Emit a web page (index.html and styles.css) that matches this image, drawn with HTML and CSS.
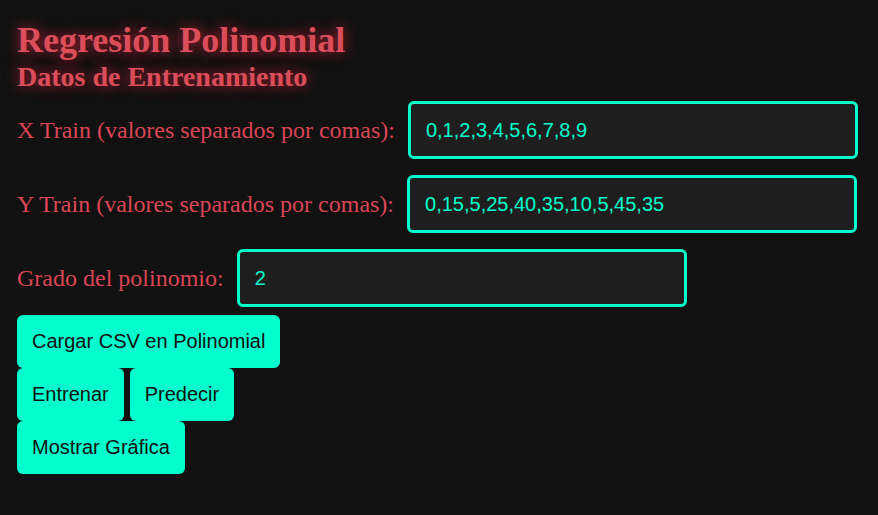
FILE: index.html
```html
<!DOCTYPE html>
<html lang="es">
<head>
<meta charset="utf-8">
<title>Regresión Polinomial</title>
<link rel="stylesheet" href="styles.css">
</head>
<body>
<main class="page">
  <h1 class="title">Regresión Polinomial</h1>
  <h2 class="subtitle">Datos de Entrenamiento</h2>
  <div class="field">
    <label class="label" for="xtrain">X Train (valores separados por comas):</label>
    <input class="input" id="xtrain" type="text" value="0,1,2,3,4,5,6,7,8,9">
  </div>
  <div class="field">
    <label class="label" for="ytrain">Y Train (valores separados por comas):</label>
    <input class="input" id="ytrain" type="text" value="0,15,5,25,40,35,10,5,45,35">
  </div>
  <div class="field">
    <label class="label" for="grado">Grado del polinomio:</label>
    <input class="input" id="grado" type="text" value="2">
  </div>
  <div class="btn-row">
    <button class="btn">Cargar CSV en Polinomial</button>
  </div>
  <div class="btn-row">
    <button class="btn">Entrenar</button>
    <button class="btn">Predecir</button>
  </div>
  <div class="btn-row">
    <button class="btn">Mostrar Gráfica</button>
  </div>
</main>
</body>
</html>
```
FILE: styles.css
```css
html, body {
  margin: 0;
  padding: 0;
  background: #111111;
}

.page {
  padding: 19px 17px;
  font-family: "Liberation Serif", "Times New Roman", serif;
}

.title {
  margin: 0;
  font-size: 36px;
  font-weight: bold;
  color: #dc4d5c;
  text-shadow: 0 0 14px rgba(230, 40, 60, 0.8);
}

.subtitle {
  margin: 0;
  font-size: 28px;
  font-weight: bold;
  color: #dc4d5c;
  text-shadow: 0 0 14px rgba(230, 40, 60, 0.8);
}

.field {
  display: flex;
  align-items: center;
  gap: 13px;
  padding: 8px 0;
}

.label {
  font-size: 24px;
  color: #dc4556;
}

.input {
  box-sizing: border-box;
  width: 450px;
  height: 58px;
  margin: 0;
  padding: 0 15px;
  border: 3px solid #00ffcc;
  border-radius: 6px;
  background: #1e1e1e;
  color: #00ffcc;
  font-family: "Liberation Sans", Arial, sans-serif;
  font-size: 20px;
  outline: none;
}

.btn-row {
  display: flex;
  gap: 6px;
}

.btn {
  margin: 0;
  padding: 15px;
  border: none;
  border-radius: 6px;
  background: #00ffcc;
  color: #111111;
  font-family: "Liberation Sans", Arial, sans-serif;
  font-size: 20px;
  line-height: 23px;
}
```
